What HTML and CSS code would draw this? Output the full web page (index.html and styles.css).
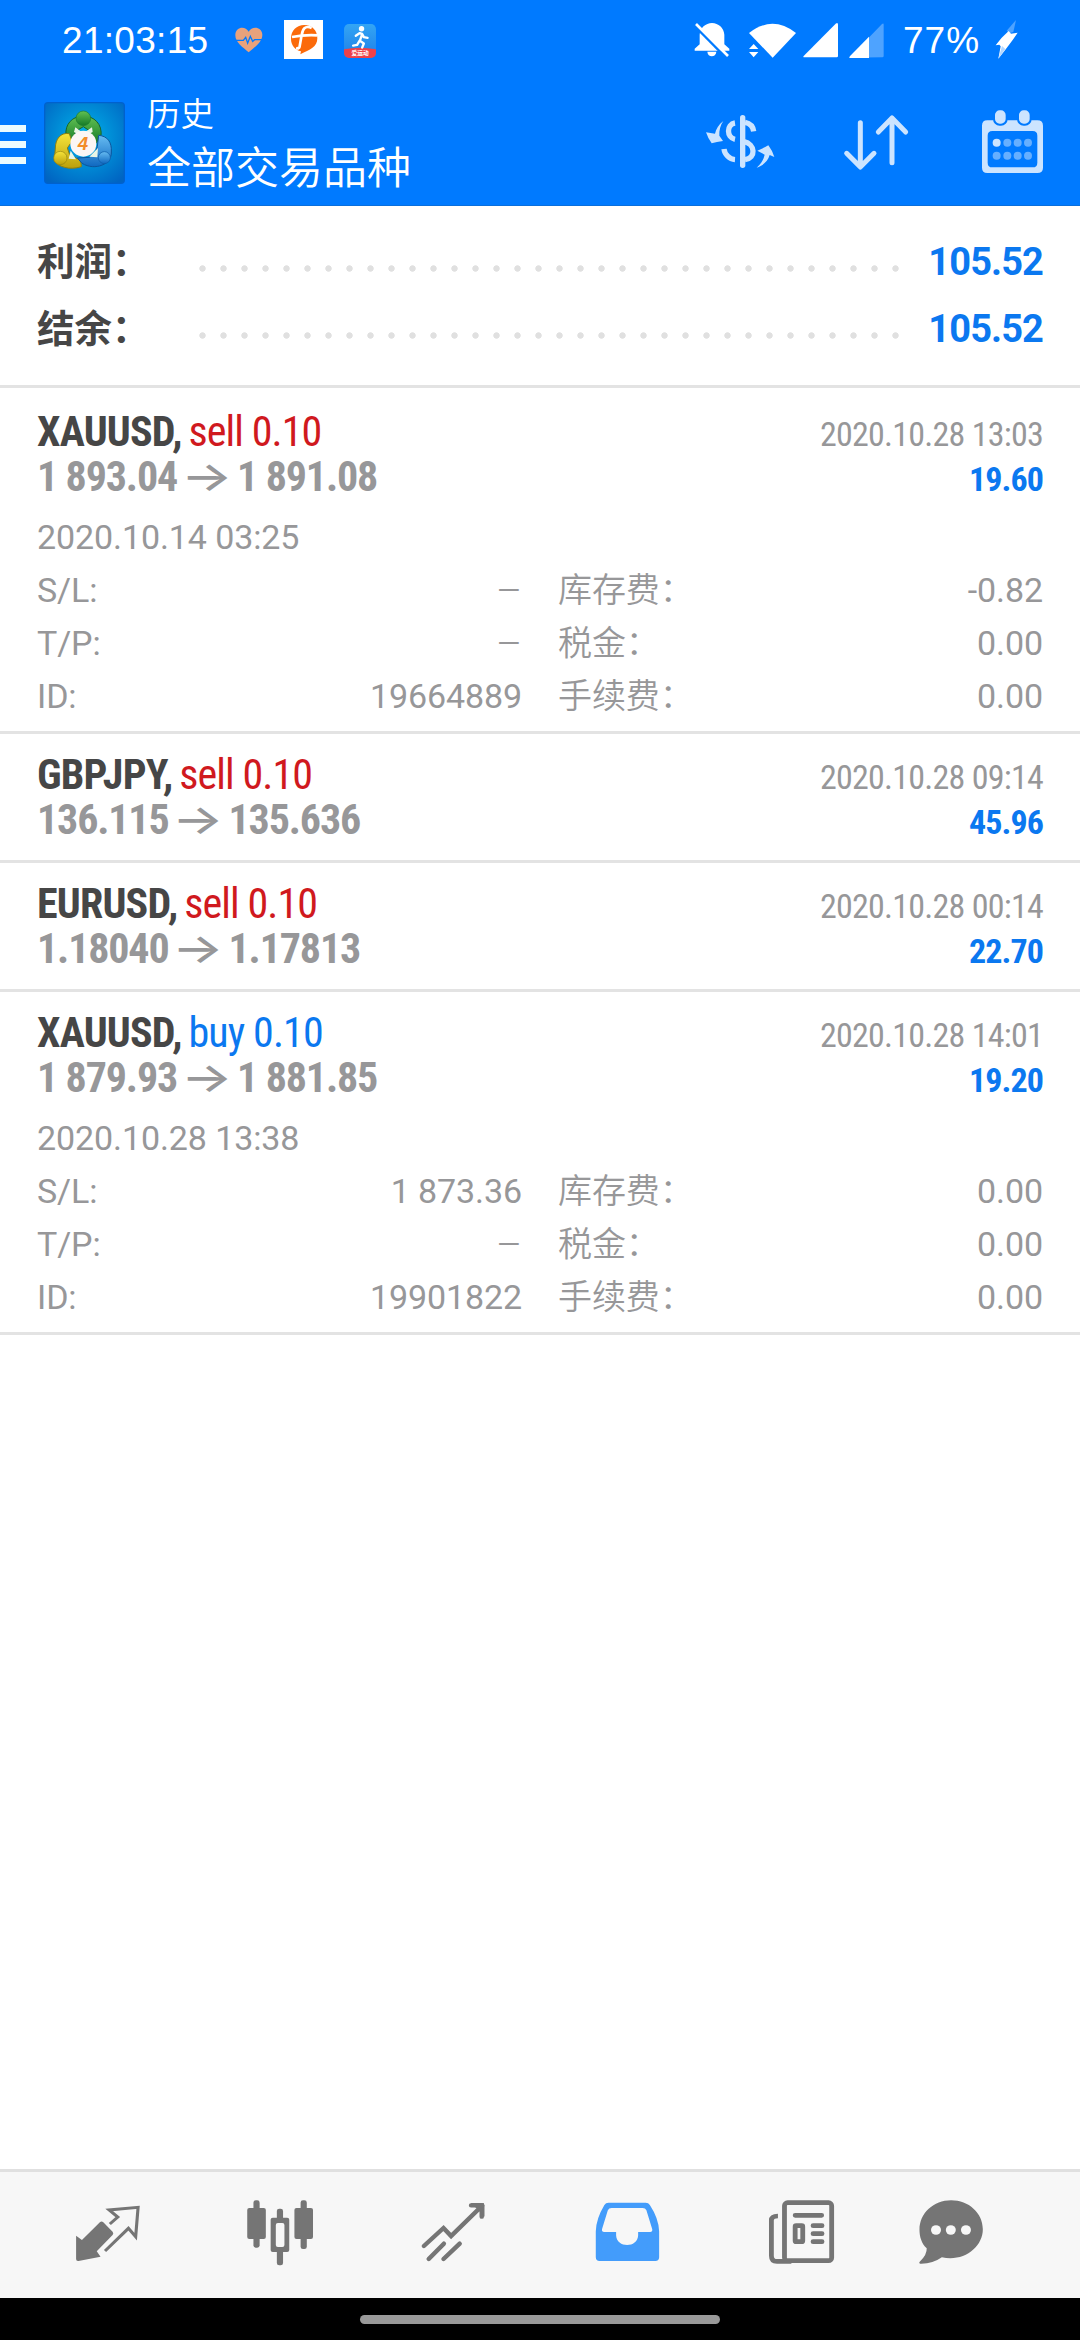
FILE: index.html
```
<!DOCTYPE html>
<html lang="zh-CN">
<head>
<meta charset="utf-8">
<title>历史</title>
<link rel="stylesheet" href="styles.css">
</head>
<body>
<header class="top">
  <div class="status">
    <span class="clock">21:03:15</span>
    <svg class="st-heart" viewBox="700 60 96 120"><path d="M747 157C730 141 706 127 707 104C708 80 737 76 747 95C757 76 787 80 788 104C788 127 764 141 747 157Z" fill="#e8a27c"/><path d="M704 121H731L738 112L744 129L752 109L759 124L765 119H792" fill="none" stroke="#007aff" stroke-width="4"/></svg>
    <svg class="st-f" viewBox="852 60 117 117"><rect x="852" y="60" width="117" height="117" fill="#fff"/><path d="M901 163L903 154C885 150 873 136 873 116C873 91 890 75 913 75C936 75 952 91 952 115C952 141 930 149 901 163Z" fill="#fb6a0a"/><path d="M876 111Q912 104 951 106M935 84C914 75 908 88 905 105L899 139Q897 147 888 145" fill="none" stroke="#fff" stroke-width="8"/></svg>
    <svg class="st-run" viewBox="1031 72 95 101"><defs><clipPath id="rc"><rect x="1031" y="72" width="95" height="101" rx="15"/></clipPath><linearGradient id="rg" x1="0" y1="0" x2="0" y2="1"><stop offset="0" stop-color="#33a5f4"/><stop offset="1" stop-color="#1e7fe8"/></linearGradient></defs><g clip-path="url(#rc)"><rect x="1031" y="72" width="95" height="101" fill="url(#rg)"/><path d="M1031 147Q1078 138 1126 147V173H1031Z" fill="#ee4149"/></g><circle cx="1083" cy="86" r="8" fill="#fff"/><path d="M1066 107L1078 99L1085 102L1078 122L1090 130L1085 142M1085 102L1090 111L1101 113M1077 122L1070 134L1058 136" fill="none" stroke="#fff" stroke-width="7" stroke-linecap="round" stroke-linejoin="round"/><text x="1079" y="164" class="tag" text-anchor="middle">爱运动</text></svg>
    <svg class="st-bell" viewBox="99 60 108 120"><path d="M101 152V146L116 133V104C117 84 134 69 153 69C172 69 189 84 190 104V133L205 146V152ZM139 155H166C165 173 140 173 139 155Z" fill="#fff"/><path d="M98 74L198 176" stroke="#007aff" stroke-width="8"/><path d="M105 72L201 168" stroke="#fff" stroke-width="8"/></svg>
    <svg class="st-wifi" viewBox="261 60 147 120"><path d="M264 99Q334 44 405 99L335 173Z" fill="#fff"/><path d="M256 156V137L277 122L318 163L300 180Z" fill="#007aff"/><path d="M264 147L278 132L292 147ZM264 156L278 172L292 156Z" fill="#fff"/></svg>
    <svg class="st-sig" viewBox="426 60 108 120"><path d="M428 168L524 71Q531 66 531 74V168Q531 172 527 172H430Q425 172 428 168Z" fill="#fff"/></svg>
    <svg class="st-sig" viewBox="564 60 108 120"><path d="M565 173L663 72Q668 68 668 74V168Q668 172 664 172Z" fill="#4ea3ff"/><path d="M568 167L624 110V174H568Q562 174 568 167Z" fill="#fff"/></svg>
    <span class="batt">77%</span>
    <svg class="st-bolt" viewBox="999 60 69 120"><path d="M1062 60L1034 92L1042 100L1054 96Z" fill="#4ea3ff"/><path d="M1040 93L1047 101L1067 98L1052 120Q1030 150 1009 176L1016 139L1012 134L1001 136Q1018 112 1040 93Z" fill="#fff"/><path d="M1020 138L1009 176L1030 147Z" fill="#b5d8ff"/></svg>
  </div>
  <div class="bar">
    <div class="burger"><i></i><i></i><i></i></div>
    <svg class="logo" viewBox="42 22 243 246">
      <defs>
        <radialGradient id="bg" cx=".5" cy=".42" r=".7"><stop offset="0" stop-color="#00b4ea"/><stop offset="1" stop-color="#0064c2"/></radialGradient>
        <linearGradient id="gr" x1="0" y1="0" x2="0" y2="1"><stop offset="0" stop-color="#62c152"/><stop offset="1" stop-color="#147a28"/></linearGradient>
        <linearGradient id="ye" x1="0" y1="0" x2="0" y2="1"><stop offset="0" stop-color="#f6e43a"/><stop offset="1" stop-color="#bba00c"/></linearGradient>
        <linearGradient id="bl" x1="0" y1="0" x2="0" y2="1"><stop offset="0" stop-color="#67bcf2"/><stop offset="1" stop-color="#0f68c0"/></linearGradient>
      </defs>
      <rect x="44" y="24" width="239" height="242" rx="10" fill="url(#bg)" stroke="#0061cd" stroke-width="4"/>
      <path d="M108 122C104 88 128 64 160 64C192 64 218 88 213 126L196 148L178 108L160 96L140 108L124 136Z" fill="url(#gr)" stroke="#18642a" stroke-width="3"/>
      <path d="M118 117C92 112 76 134 76 160L73 198C84 216 118 228 154 216L152 196L120 183L112 160L126 140Z" fill="url(#ye)" stroke="#8b7e12" stroke-width="3"/>
      <path d="M206 122C232 124 246 142 244 172C246 208 196 230 156 206L142 190L178 188L196 176L202 156Z" fill="url(#bl)" stroke="#0c559c" stroke-width="3"/>
      <path d="M136 98L160 116L186 98L188 112L160 128L132 112ZM122 168L138 194L116 192ZM204 160L178 186L202 188Z" fill="#e9f5e6"/>
      <circle cx="160" cy="71" r="22" fill="url(#gr)" stroke="#1d7a30" stroke-width="2"/>
      <circle cx="91" cy="190" r="20" fill="url(#ye)" stroke="#948410" stroke-width="2"/>
      <circle cx="223" cy="189" r="18" fill="url(#bl)" stroke="#0c5ba8" stroke-width="2"/>
      <circle cx="160" cy="147" r="39" fill="#fbf6f4"/>
      <text x="159" y="167" text-anchor="middle" class="four">4</text>
    </svg>
    <div class="titles"><div class="t1">历史</div><div class="t2">全部交易品种</div></div>
    <svg class="tool" viewBox="105 240 270 378">
      <g fill="none" stroke="#cce4ff" stroke-width="16"><path d="M248 353V496" stroke-linecap="round"/><path d="M225 369C199 373 199 413 225 418M192 447C194 463 208 478 225 479"/><path d="M255 367C270 370 279 378 281 394" stroke-linecap="butt"/><path d="M252 425C286 432 289 474 255 479"/></g>
      <path d="M190 363C176 374 168 387 165 401L138 397Q144 415 155 430Q170 425 189 423L178 407C177 391 181 376 190 363Z" fill="#cce4ff"/>
      <path d="M290 503C303 492 311 479 314 464L292 452Q309 445 325 436Q336 450 343 471L329 465C324 482 310 497 290 503Z" fill="#cce4ff"/>
    </svg>
    <svg class="tool" viewBox="513 240 270 378"><path d="M601 368V500M560 460L601 501L642 460M696 488V354M655 396L696 354L737 396" fill="none" stroke="#cce4ff" stroke-width="15" stroke-linecap="round" stroke-linejoin="round"/></svg>
    <svg class="tool" viewBox="921 240 270 378">
      <path d="M982 361H1132Q1149 361 1149 377V503Q1149 519 1132 519H982Q966 519 966 503V377Q966 361 982 361ZM997 393Q983 393 983 407V488Q983 502 997 502H1118Q1132 502 1132 488V407Q1132 393 1118 393Z" fill="#cce4ff" fill-rule="evenodd"/>
      <g fill="#cce4ff" stroke="#007aff" stroke-width="6"><rect x="1002" y="328" width="38" height="46" rx="17"/><rect x="1074" y="328" width="38" height="46" rx="17"/></g>
      <circle cx="1010" cy="428" r="12" fill="#cce4ff"/>
      <g fill="#66afff"><circle cx="1042" cy="428" r="12"/><circle cx="1073" cy="428" r="12"/><circle cx="1104" cy="428" r="12"/><circle cx="1010" cy="467" r="12"/><circle cx="1042" cy="467" r="12"/><circle cx="1073" cy="467" r="12"/><circle cx="1104" cy="467" r="12"/></g>
    </svg>
  </div>
</header>

<main class="content">
  <section class="summary">
    <div class="sum"><span class="sum-l">利润：</span><span class="dots"></span><span class="sum-v">105.52</span></div>
    <div class="sum"><span class="sum-l">结余：</span><span class="dots"></span><span class="sum-v">105.52</span></div>
  </section>

  <section class="deal first">
    <div class="line"><span class="sym"><b>XAUUSD,</b> <span class="sell">sell 0.10</span></span><span class="time">2020.10.28 13:03</span></div>
    <div class="line"><span class="price">1 893.04 <span class="arr">→</span> 1 891.08</span><span class="gain">19.60</span></div>
    <div class="details">
      <div class="opened">2020.10.14 03:25</div>
      <div class="cell"><span>S/L:</span><span class="none">–</span></div><div class="cell"><span>库存费：</span><span>-0.82</span></div>
      <div class="cell"><span>T/P:</span><span class="none">–</span></div><div class="cell"><span>税金：</span><span>0.00</span></div>
      <div class="cell"><span>ID:</span><span>19664889</span></div><div class="cell"><span>手续费：</span><span>0.00</span></div>
    </div>
  </section>

  <section class="deal">
    <div class="line"><span class="sym"><b>GBPJPY,</b> <span class="sell">sell 0.10</span></span><span class="time">2020.10.28 09:14</span></div>
    <div class="line"><span class="price">136.115 <span class="arr">→</span> 135.636</span><span class="gain">45.96</span></div>
  </section>

  <section class="deal">
    <div class="line"><span class="sym"><b>EURUSD,</b> <span class="sell">sell 0.10</span></span><span class="time">2020.10.28 00:14</span></div>
    <div class="line"><span class="price">1.18040 <span class="arr">→</span> 1.17813</span><span class="gain">22.70</span></div>
  </section>

  <section class="deal">
    <div class="line"><span class="sym"><b>XAUUSD,</b> <span class="buy">buy 0.10</span></span><span class="time">2020.10.28 14:01</span></div>
    <div class="line"><span class="price">1 879.93 <span class="arr">→</span> 1 881.85</span><span class="gain">19.20</span></div>
    <div class="details">
      <div class="opened">2020.10.28 13:38</div>
      <div class="cell"><span>S/L:</span><span>1 873.36</span></div><div class="cell"><span>库存费：</span><span>0.00</span></div>
      <div class="cell"><span>T/P:</span><span class="none">–</span></div><div class="cell"><span>税金：</span><span>0.00</span></div>
      <div class="cell"><span>ID:</span><span>19901822</span></div><div class="cell"><span>手续费：</span><span>0.00</span></div>
    </div>
  </section>
</main>

<nav class="tabs">
  <svg class="tab" viewBox="139.4 66 348.5 378" preserveAspectRatio="none">
    <path d="M221 257L238 270L290 217Q295 212 300 217L327 245Q331 250 327 255L281 304L292 320L228 333Q221 334 221 327Z" fill="#757575"/>
    <path d="M319 222L342 201L317 180L401 172L394 260L373 235L305 303" fill="none" stroke="#757575" stroke-width="9"/>
  </svg>
  <svg class="tab" viewBox="641.8 66 348.5 378" preserveAspectRatio="none">
    <g fill="#757575"><rect x="736" y="151" width="18" height="142" rx="7"/><rect x="718" y="174" width="54" height="93" rx="6"/><rect x="873" y="151" width="18" height="146" rx="7"/><rect x="855" y="174" width="54" height="93" rx="6"/><rect x="804" y="176" width="18" height="170" rx="7"/><rect x="786" y="203" width="54" height="103" rx="6"/></g><rect x="801" y="219" width="25" height="72" rx="6" fill="#f7f7f7"/>
  </svg>
  <svg class="tab" viewBox="1144.2 66 348.5 378" preserveAspectRatio="none">
    <path d="M1231 288L1288 234L1310 258L1400 167M1368 166H1399V200M1245 327L1289 281M1288 327L1335 281" fill="none" stroke="#757575" stroke-width="13" stroke-linecap="round"/>
    <path d="M1366 159H1400Q1407 159 1407 166V200L1392 182Z" fill="#757575"/>
  </svg>
  <svg class="tab" viewBox="78.4 66 348.5 378" preserveAspectRatio="none">
    <path d="M199 158H307Q315 158 319 165Q345 206 346 244V322Q346 333 335 333H173Q162 333 162 322V244Q163 206 187 165Q191 158 199 158ZM208 174Q200 174 197 181L180 238Q179 246 186 246H221V256C222 295 284 295 285 256V246H320Q327 246 326 238L309 181Q306 174 298 174Z" fill="#439cfb" fill-rule="evenodd"/>
  </svg>
  <svg class="tab" viewBox="580.8 66 348.5 378" preserveAspectRatio="none">
    <g fill="none" stroke="#757575" stroke-width="14"><rect x="710" y="158" width="137" height="174" rx="9"/><path d="M691 198Q672 198 672 211V317Q672 334 688 334H730"/><rect x="741" y="227" width="22" height="48" rx="3"/><path d="M741 196H818M793 227H819M793 251H819M793 275H819" stroke-linecap="round"/></g>
  </svg>
  <svg class="tab" viewBox="1019.3 66 348.5 378" preserveAspectRatio="none">
    <path d="M1194 151C1245 151 1286 189 1286 238C1286 292 1230 337 1167 322Q1140 342 1104 341C1100 341 1101 336 1104 334Q1124 314 1123 295C1108 280 1102 260 1102 239C1102 190 1143 151 1194 151Z" fill="#757575"/>
    <g fill="#f7f7f7"><circle cx="1150" cy="240" r="14.5"/><circle cx="1193" cy="240" r="14.5"/><circle cx="1237" cy="240" r="14.5"/></g>
  </svg>
</nav>
<footer class="gesture"><div class="pill"></div></footer>
</body>
</html>
```
FILE: styles.css
```
* { box-sizing: border-box; }
body {
  margin: 0;
  width: 1080px;
  height: 2340px;
  display: flex;
  flex-direction: column;
  background: #fff;
  font-family: Roboto, "Noto Sans CJK SC", sans-serif;
  overflow: hidden;
}
svg { display: block; flex: none; }

.top { height: 206px; background: #007aff; color: #fff; border-bottom: 1px solid #0a6fdc; }
.status { height: 80px; padding: 20px 0 0 62px; display: flex; align-items: flex-start; }
.clock, .batt { font: 37px/41px "Liberation Sans", sans-serif; white-space: nowrap; }
.clock { width: 174px; letter-spacing: .3px; }
.st-heart { width: 32px; height: 40px; margin-left: -3px; }
.st-f { width: 39px; height: 39px; margin-left: 19px; }
.st-run { width: 32px; height: 34px; margin: 4px 0 0 21px; }
.tag { font: 700 17px "Noto Sans CJK SC", sans-serif; fill: #fff; }
.st-bell { width: 36px; height: 40px; margin-left: 318px; }
.st-wifi { width: 49px; height: 40px; margin-left: 18px; }
.st-sig { width: 36px; height: 40px; margin-left: 6px; }
.st-sig + .st-sig { margin-left: 10px; }
.batt { width: 92px; margin-left: 18px; letter-spacing: 1px; }
.st-bolt { width: 23px; height: 40px; }

.bar { height: 125px; display: flex; align-items: flex-start; padding-right: 23px; }
.burger { width: 26px; padding-top: 45px; display: flex; flex-direction: column; gap: 9px; }
.burger i { height: 7px; background: #ebfbff; }
.logo { width: 81px; height: 82px; margin: 22px 0 0 18px; }
.four { font: italic 700 56px "Liberation Sans", sans-serif; fill: #f28c28; }
.titles { flex: 1; padding: 8px 0 0 22px; font-family: "Noto Sans CJK SC", sans-serif; font-weight: 350; white-space: nowrap; }
.t1 { font-size: 33.5px; line-height: 48px; }
.t2 { font-size: 44px; line-height: 59px; }
.tool { width: 90px; height: 126px; margin-left: 46px; }

.content { flex: 1; }
.summary { height: 182px; padding: 23px 37px 0; border-bottom: 3px solid #e3e3e3; }
.sum { height: 67px; display: flex; align-items: center; line-height: 67px; font-size: 38px; font-weight: 700; }
.sum-l { width: 155px; color: #464646; white-space: nowrap; font-size: 37.5px; }
.dots {
  width: 714px;
  height: 7px;
  margin-top: 12px;
  background: radial-gradient(circle at center, #e0e0e0 2.8px, transparent 3.6px) 0 0 / 21px 7px repeat-x;
}
.sum-v { flex: 1; text-align: right; color: #0b78f0; letter-spacing: -.9px; }

.deal { padding: 18px 37px; border-bottom: 3px solid #e3e3e3; }
.deal.first { padding-top: 21px; }
.line {
  height: 45px;
  line-height: 45px;
  display: flex;
  justify-content: space-between;
  align-items: baseline;
  font-family: "Roboto Condensed", "Noto Sans CJK SC", sans-serif;
  white-space: nowrap;
}
.sym { font-size: 42px; color: #464646; letter-spacing: -.9px; }
.sym b { letter-spacing: -.8px; margin-right: -2px; }
.sell { color: #d0191e; }
.buy { color: #0b78f0; }
.time { font-size: 34px; color: #979799; letter-spacing: -.75px; }
.price { font-size: 42px; font-weight: 700; color: #979799; letter-spacing: -1.15px; }
.arr {
  display: inline-block;
  margin: 0 4px 0 1px;
  transform: scaleX(1.32);
  font-family: Inter, sans-serif;
  font-size: 41px;
  font-weight: 500;
  line-height: 0;
}
.gain { font-size: 34px; font-weight: 700; color: #0b78f0; letter-spacing: -.9px; }
.details {
  display: grid;
  grid-template-columns: 485px 485px;
  column-gap: 36px;
  margin: 12px 0 -10px;
  font-size: 34px;
  font-weight: 365;
  line-height: 53px;
  letter-spacing: -.1px;
  color: #979799;
}
.opened { grid-column: 1 / 3; }
.cell { height: 53px; display: flex; justify-content: space-between; white-space: nowrap; }
.none { font-size: 40px; font-weight: 350; line-height: 55px; }

.tabs { height: 129px; border-top: 3px solid #e0e0e0; background: #f7f7f7; display: flex; gap: 53px; padding-left: 48px; }
.tab { width: 120px; height: 126px; }
.tab:last-child { margin-left: -22px; }
.gesture { height: 42px; background: #000; padding-top: 17px; }
.pill { width: 360px; height: 9px; margin: 0 auto; border-radius: 5px; background: #999; }
```
